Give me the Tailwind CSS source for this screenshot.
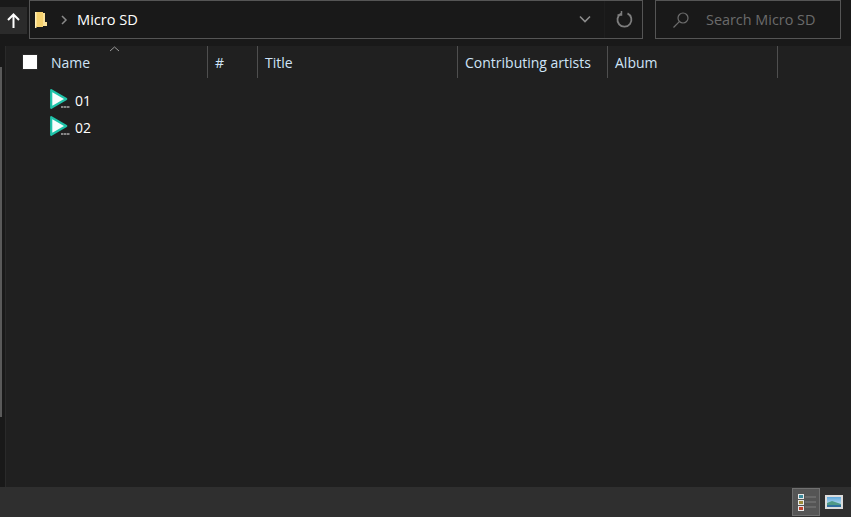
<!DOCTYPE html>
<html><head><meta charset="utf-8">
<script src="https://cdn.jsdelivr.net/npm/@tailwindcss/browser@4"></script>
<title>Micro SD</title></head>
<body class="bg-[#202020]">
<div class="w-[851px] h-[517px] flex flex-col overflow-hidden bg-[#202020] font-['Open_Sans',sans-serif] text-[14px]">
  <!-- toolbar -->
  <div class="h-[46px] shrink-0 bg-[#191919] flex items-start">
    <div class="w-[27px] h-[27px] mt-[7px] bg-[#2b2b2b] flex items-center justify-center">
      <svg width="13" height="15" viewBox="0 0 13 15" fill="none" stroke="#fff" stroke-width="2"><path d="M6.5 15V1.5M1 7l5.5-5.5L12 7"/></svg>
    </div>
    <div class="ml-[2px] w-[614px] h-[39px] border border-[#555] bg-[#191919] flex items-center">
      <svg class="ml-[4px]" width="14" height="18" viewBox="0 0 14 18"><path d="M1 1h8v15H3l-2-1z" fill="#f6d26f"/><path d="M9 2h2v9h2v4H9z" fill="#fbe29a"/><path d="M1 1h1.5v16H1z" fill="#ffeeb5"/></svg>
      <svg class="ml-[12px]" width="8" height="10" viewBox="0 0 8 10" fill="none" stroke="#8a8a8a" stroke-width="1.5"><path d="M2 1l4 4-4 4"/></svg>
      <span class="ml-[9px] text-white whitespace-nowrap text-[14.6px]">Micro SD</span>
      <div class="ml-auto flex items-center h-full">
        <svg width="14" height="9" viewBox="0 0 14 9" fill="none" stroke="#8c8c8c" stroke-width="1.6"><path d="M2 1.5l5 5 5-5"/></svg>
        <div class="ml-[12px] w-px h-full bg-[#1e1e1e]"></div>
        <svg class="ml-[11px] mr-[9px]" width="17" height="17" viewBox="0 0 17 17" fill="none" stroke="#7d7d7d" stroke-width="1.8"><path d="M5 2.6a7 7 0 1 0 6.5-.2"/><path d="M5.5 0v4H1.5" stroke-width="1.5"/></svg>
      </div>
    </div>
    <div class="ml-[12px] w-[186px] h-[39px] border border-[#555] bg-[#191919] flex items-center">
      <svg class="ml-[17px]" width="16" height="16" viewBox="0 0 16 16" fill="none" stroke="#6e6e6e" stroke-width="1.2"><circle cx="10" cy="6" r="5"/><path d="M6.3 9.7L.5 15.5"/></svg>
      <span class="ml-[17px] text-[#6b6b6b] whitespace-nowrap text-[14.4px]">Search Micro SD</span>
    </div>
  </div>
  <!-- body -->
  <div class="flex-1 flex min-h-0">
    <div class="w-[6px] shrink-0 flex border-r border-[#2a2a2a] bg-[#191919]">
      <div class="w-[2px] mt-[21px] h-[350px] bg-[#5a5a5a]"></div>
    </div>
    <div class="flex-1 flex flex-col min-w-0">
      <div class="relative flex h-[32px] text-[#cfe4f7]">
        <svg class="absolute left-[103px] top-0" width="11" height="6" viewBox="0 0 11 6" fill="none" stroke="#9a9a9a"><path d="M1 5l4.5-4L10 5"/></svg>
        <div class="w-[202px] flex items-center border-r border-[#4f4f4f]">
          <div class="ml-[16px] w-[16px] h-[16px] bg-white border border-[#2b2b2b]"></div>
          <span class="ml-[13px] mt-[1px]">Name</span>
        </div>
        <div class="w-[50px] flex items-center pl-[7px] border-r border-[#4f4f4f]"><span class="mt-[1px]">#</span></div>
        <div class="w-[200px] flex items-center pl-[7px] border-r border-[#4f4f4f]"><span class="mt-[1px]">Title</span></div>
        <div class="w-[150px] flex items-center pl-[7px] border-r border-[#4f4f4f]"><span class="mt-[1px] whitespace-nowrap">Contributing artists</span></div>
        <div class="w-[170px] flex items-center pl-[7px] border-r border-[#4f4f4f]"><span class="mt-[1px]">Album</span></div>
      </div>
      <div class="pt-[8px] pl-[44px] text-white">
        <div class="h-[27px] flex items-center gap-[5px]">
          <svg class="-mt-[1px]" width="20" height="20" viewBox="0 0 20 20"><path d="M1.2 1.2L16.2 10 1.2 18.8z" fill="#f8fdfc" stroke="#1fc4aa" stroke-width="2.2" stroke-linejoin="round"/><rect x="10.5" y="16" width="9.5" height="4" fill="#202020"/><path d="M11 18h2.5M14 18h2.5M17 18h2.5" stroke="#a8a8a8" stroke-width="1.3"/></svg>
          <span class="mt-[1px]">01</span>
        </div>
        <div class="h-[27px] flex items-center gap-[5px]">
          <svg class="-mt-[1px]" width="20" height="20" viewBox="0 0 20 20"><path d="M1.2 1.2L16.2 10 1.2 18.8z" fill="#f8fdfc" stroke="#1fc4aa" stroke-width="2.2" stroke-linejoin="round"/><rect x="10.5" y="16" width="9.5" height="4" fill="#202020"/><path d="M11 18h2.5M14 18h2.5M17 18h2.5" stroke="#a8a8a8" stroke-width="1.3"/></svg>
          <span class="mt-[1px]">02</span>
        </div>
      </div>
    </div>
  </div>
  <!-- status -->
  <div class="h-[30px] shrink-0 bg-[#2f2f2f] flex items-center justify-end">
    <div class="w-[28px] h-[28px] bg-[#555] border border-[#707070] flex items-center pl-[5px] gap-px">
      <div class="w-[6px] flex flex-col gap-px">
        <div class="h-[5px] bg-[#3b8a9c] border border-[#e8e8e8]"></div>
        <div class="h-[5px] bg-[#9c8b3b] border border-[#e8e8e8]"></div>
        <div class="h-[5px] bg-[#c0432f] border border-[#e8e8e8]"></div>
      </div>
      <div class="w-[11px] flex flex-col gap-[3px]">
        <div class="h-[2px] bg-[#696969]"></div><div class="h-[2px] bg-[#696969]"></div><div class="h-[2px] bg-[#696969]"></div>
      </div>
    </div>
    <svg class="ml-[5px] mr-[8px]" width="18" height="14" viewBox="0 0 18 14"><defs><linearGradient id="sky" x1="0" y1="0" x2="0" y2="1"><stop offset="0" stop-color="#5fa8dc"/><stop offset="1" stop-color="#d8edf5"/></linearGradient></defs><rect width="18" height="14" fill="#dcdcdc"/><rect x="2" y="2" width="14" height="10" fill="url(#sky)"/><path d="M2 8l5-2 9 3v3H2z" fill="#4f9a86"/><path d="M2 10h14v2H2z" fill="#2f6f9f"/></svg>
  </div>
</div>
</body></html>
